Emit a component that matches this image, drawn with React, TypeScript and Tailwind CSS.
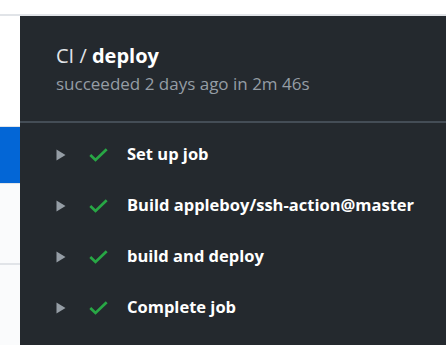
import React from "react";

const steps = ["Set up job", "Build appleboy/ssh-action@master", "build and deploy", "Complete job"];

function Check() {
  return (
    <svg width="19" height="14" viewBox="0 0 19 14" className="shrink-0">
      <path d="M1.3 7 L6.5 12 L17.7 1.3" fill="none" stroke="#28a745" strokeWidth="2.7" strokeLinejoin="miter" />
    </svg>
  );
}

function Tri() {
  return (
    <svg width="10" height="12" viewBox="0 0 10 12" className="shrink-0">
      <path d="M0.5 0.5 L9.5 6 L0.5 11.5 Z" fill="#959da5" />
    </svg>
  );
}

export default function App() {
  return (
    <div className="w-[446px] h-[345px] overflow-hidden bg-white flex flex-col" style={{ fontFamily: '"Open Sans", "Noto Sans", sans-serif' }}>
      <div className="h-[14px] shrink-0 bg-white" />
      <div className="h-[2px] shrink-0 bg-[#e1e4e8]" />
      <div className="flex flex-1 min-h-0">
        <div className="w-[20px] shrink-0 flex flex-col">
          <div className="h-[110px] bg-white" />
          <div className="h-[1px] bg-[#e1e4e8]" />
          <div className="h-[56px] bg-[#0366d6]" />
          <div className="h-[1px] bg-[#e1e4e8]" />
          <div className="h-[79px] bg-[#fafbfc]" />
          <div className="h-[2px] bg-[#e1e4e8]" />
          <div className="flex-1 bg-[#fafbfc]" />
        </div>
        <div className="flex-1 bg-[#24292e] flex flex-col">
          <div className="h-[105px] pl-[36px] pt-[26px]">
            <div className="text-[20px] leading-[28px] text-[#e1e4e8]">
              CI / <span className="font-bold text-white">deploy</span>
            </div>
            <div className="text-[17px] leading-[24px] mt-[2px] text-[#959da5]">succeeded 2 days ago in 2m 46s</div>
          </div>
          <div className="h-[2px] bg-[#444d56]" />
          <div className="flex flex-col pt-[6px]">
            {steps.map((s) => (
              <div key={s} className="h-[51px] flex items-center pl-[36px]">
                <Tri />
                <div className="ml-[23px] flex items-center"><Check /></div>
                <span className="ml-[19px] text-[16.5px] font-bold text-white whitespace-nowrap">{s}</span>
              </div>
            ))}
          </div>
        </div>
      </div>
    </div>
  );
}
